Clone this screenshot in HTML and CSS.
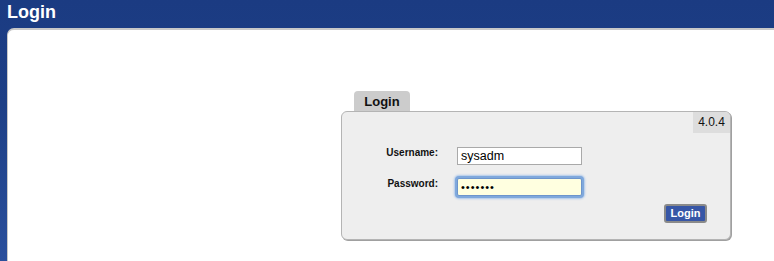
FILE: index.html
```html
<!DOCTYPE html>
<html>
<head>
<meta charset="utf-8">
<link rel="stylesheet" href="styles.css">
</head>
<body>
<header class="topbar"><h1 class="title">Login</h1></header>
<main class="content">
  <div class="login-wrap">
    <div class="tab">Login</div>
    <div class="panel">
      <div class="version-row"><span class="version">4.0.4</span></div>
      <form class="form">
        <label class="label" for="u">Username:</label>
        <input class="field" id="u" type="text" value="sysadm">
        <span></span>
        <label class="label" for="p">Password:</label>
        <input class="field focused" id="p" type="password" value="sysadmn">
        <span></span>
        <div class="actions"><button class="btn" type="button">Login</button></div>
      </form>
    </div>
  </div>
</main>
</body>
</html>
```
FILE: styles.css
```css
html, body { margin: 0; padding: 0; height: 100%; }
body {
  background: linear-gradient(#1b3b82, #1d3f86 40%, #2a4f9c);
  font-family: "Liberation Sans", Arial, sans-serif;
  display: flex;
  flex-direction: column;
  overflow: hidden;
}
.topbar { height: 28px; flex: none; }
.title {
  margin: 0;
  padding: 2px 0 0 7px;
  color: #fff;
  font-size: 18px;
  font-weight: bold;
  line-height: 20px;
}
.content {
  flex: 1;
  margin-left: 7px;
  background: #fff;
  border-top: 2px solid #c8c8c8;
  border-left: 1px solid #c8c8c8;
  border-top-left-radius: 7px;
}
.login-wrap {
  margin: 61px 0 0 333px;
  width: 392px;
}
.tab {
  margin-left: 13px;
  width: 56px;
  height: 20px;
  background: #cccccc;
  border-radius: 4px 4px 0 0;
  font-size: 13px;
  font-weight: bold;
  color: #111;
  text-align: center;
  line-height: 22px;
}
.panel {
  width: 388px;
  height: 127px;
  background: #eeeeee;
  border: 1px solid #b4b4b4;
  border-radius: 6px;
  box-shadow: 1px 1px 0 #a0a0a0;
}
.version-row { display: flex; justify-content: flex-end; }
.version {
  width: 37px;
  height: 21px;
  background: #dddddd;
  border-top-right-radius: 5px;
  font-size: 12px;
  line-height: 21px;
  text-align: center;
  color: #111;
}
.form {
  display: grid;
  grid-template-columns: 80px 125px 1fr;
  column-gap: 19px;
  row-gap: 13px;
  margin: 14px 23px 0 16px;
  align-items: start;
}
.label {
  font-size: 10px;
  font-weight: bold;
  text-align: right;
  color: #111;
  padding-top: 0;
  line-height: 12px;
}
.field {
  box-sizing: border-box;
  width: 125px;
  height: 18px;
  margin: 0;
  padding: 0 3px;
  border: 1px solid #a9a9a9;
  background: #fff;
  font-family: "Liberation Sans", Arial, sans-serif;
  font-size: 12.5px;
  color: #000;
  outline: none;
}
.focused {
  background: #ffffe0;
  border-color: #6d95cc;
  box-shadow: 0 0 0 2px #7fa8dc, 0 0 2px 3px #aac6ea;
  border-radius: 2px;
  font-size: 11px;
  letter-spacing: 1px;
}
.actions {
  grid-column: 1 / -1;
  display: flex;
  justify-content: flex-end;
  margin-top: -5px;
}
.btn {
  width: 43px;
  height: 19px;
  padding: 0;
  background: #3756a6;
  border: 2px solid #8a8a8a;
  border-radius: 3px;
  color: #fff;
  font-family: "Liberation Sans", Arial, sans-serif;
  font-size: 11px;
  font-weight: bold;
  line-height: 15px;
}
```
